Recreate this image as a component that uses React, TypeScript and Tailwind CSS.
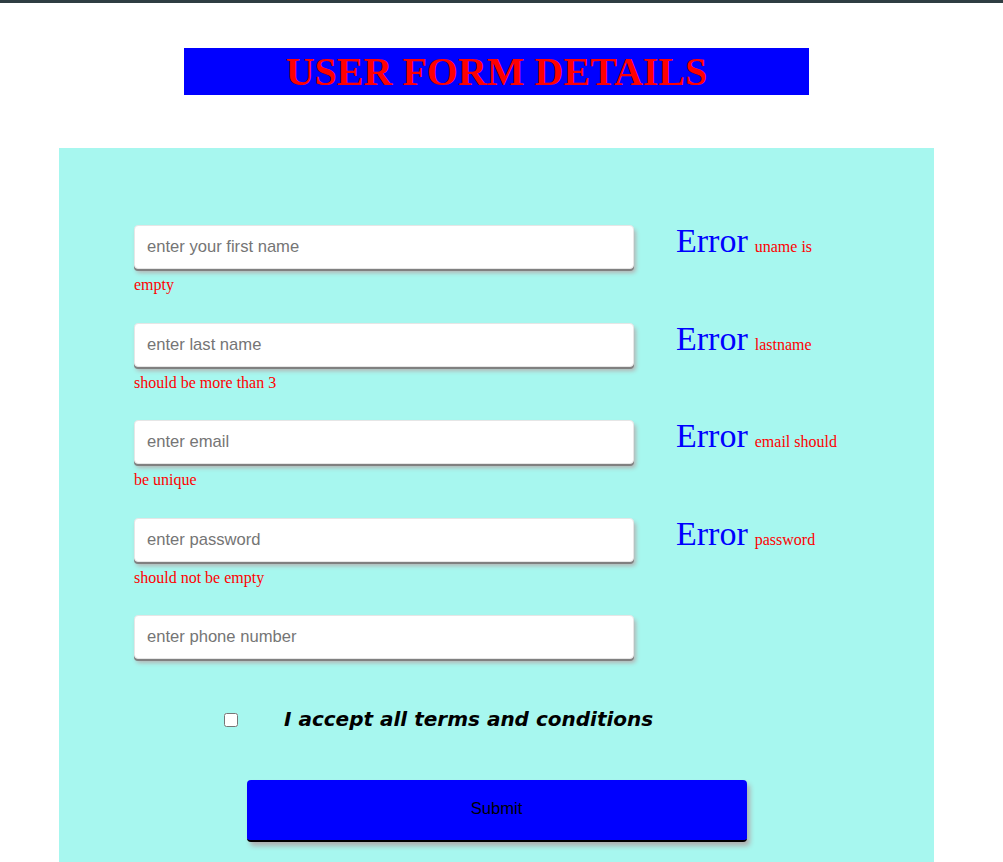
import React from "react"

const fields = [
  { placeholder: "enter your first name", error: "uname is empty" },
  { placeholder: "enter last name", error: "lastname should be more than 3" },
  { placeholder: "enter email", error: "email should be unique" },
  { placeholder: "enter password", error: "password should not be empty" },
]

const inputClass =
  "inline-block w-[500px] h-[44px] px-3 border border-[#e6e6e6] rounded bg-white text-[16.6px] text-black placeholder:text-[#757575] outline-none shadow-[0_2px_0_#808080,2px_4px_4px_#b5b5b5] font-['Liberation_Sans',Arial,sans-serif] align-baseline"

export default function App() {
  return (
    <div className="min-h-screen bg-white font-['Liberation_Serif','Times_New_Roman',serif]">
      {/* top strip */}
      <div className="h-[3px] bg-[#2f3d42]" />

      {/* heading */}
      <h1 className="mt-[45px] ml-[184px] w-[625px] h-[47px] bg-[#0000ff] text-center text-[40px] leading-[47px] font-bold text-[#ff0000]">
        USER FORM DETAILS
      </h1>

      {/* form card */}
      <form className="mt-[53px] ml-[59px] w-[875px] bg-[#a7f7ef] pt-[76px] pb-[20px] px-[75px]">
        {fields.map((f) => (
          <div key={f.placeholder} className="w-[716px] mb-[27.25px] text-[16px] leading-[18.4px]">
            <input type="text" placeholder={f.placeholder} className={inputClass + " mb-[7px]"} />
            <span className="ml-[42px] text-[34px] leading-none text-[#0000ff]">Error</span>
            <span className="ml-[7px] text-[#ff0000]">{f.error}</span>
          </div>
        ))}

        <div className="w-[716px]">
          <input type="text" placeholder="enter phone number" className={inputClass} />
        </div>

        {/* terms */}
        <div className="mt-[48px] h-[24px] flex items-center pl-[90px] gap-[46px]">
          <input type="checkbox" className="w-[14px] h-[14px] mt-[3px]" />
          <span className="text-[20px] font-bold italic text-black font-['DejaVu_Sans',Verdana,sans-serif]">
            I accept all terms and conditions
          </span>
        </div>

        <button
          type="button"
          className="block mx-auto mt-[49px] w-[500px] h-[62px] rounded bg-[#0000ff] border-b-2 border-black text-[16.6px] text-black shadow-[3px_4px_5px_#b0b0b0] font-['Liberation_Sans',Arial,sans-serif]"
        >
          Submit
        </button>
      </form>
    </div>
  )
}
